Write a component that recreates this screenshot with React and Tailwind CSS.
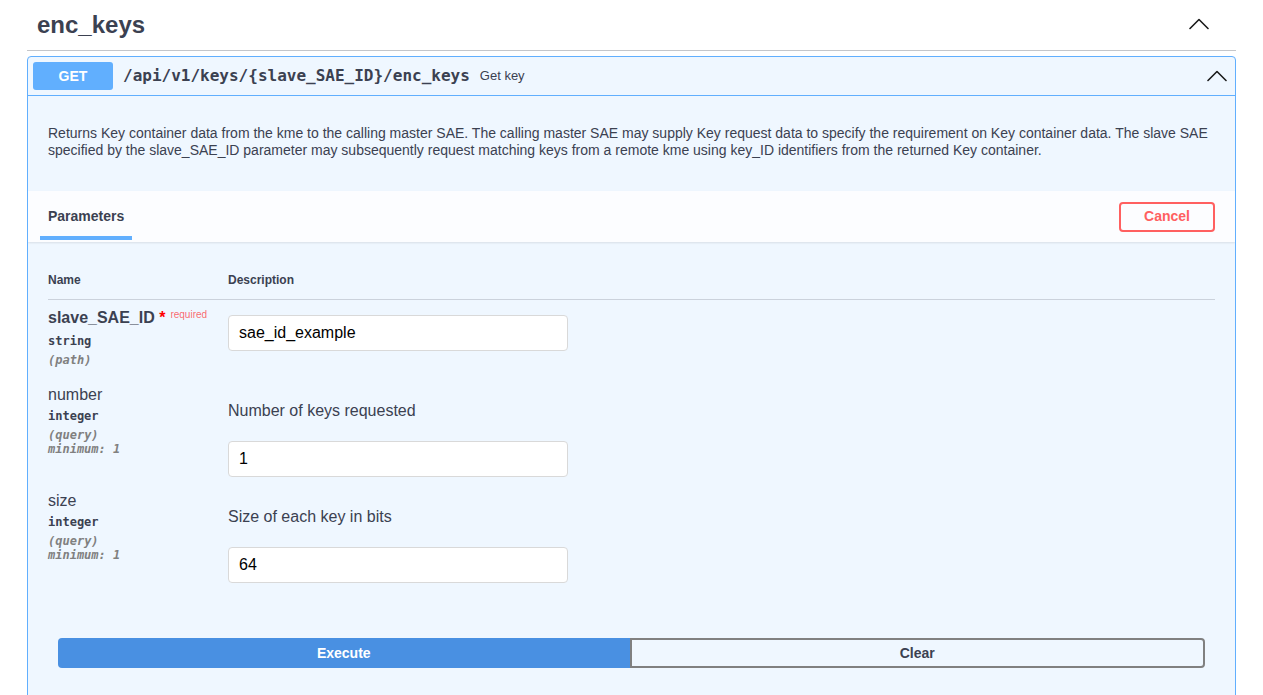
import React from 'react';

const sans = { fontFamily: '"Liberation Sans", Arial, sans-serif' };
const mono = { fontFamily: '"DejaVu Sans Mono", "Liberation Mono", monospace' };

const Chevron = ({ className = '' }) => (
    <svg viewBox="0 0 20 20" className={className} fill="none" stroke="#1b1b1b" strokeWidth="1.6" strokeLinecap="round" strokeLinejoin="round">
        <polyline points="1,14.5 10,5.5 19,14.5" />
    </svg>
);

const ParamInput = ({ value }) => (
    <input
        type="text"
        defaultValue={value}
        className="w-[340px] h-[36px] bg-white border border-[#d9d9d9] rounded-[4px] pl-[10px] text-[16px] text-[#000] outline-none"
        style={sans}
    />
);

const ParamRow = ({ name, required, type, location, minimum, description, value, first }) => (
    <div className="flex">
        <div className={`w-[180px] shrink-0 pt-[9px] ${first ? 'pb-[10px]' : ''}`}>
            <div className={`text-[16px] leading-[18px] ${required ? 'font-bold' : ''}`}>
                {name}
                {required && (
                    <>
                        <span className="text-[#ff0000]">&nbsp;*</span>
                        <span className="relative -top-[5px] pl-[5px] text-[10px] font-normal text-[rgba(255,0,0,0.6)]">required</span>
                    </>
                )}
            </div>
            <div className="pt-[5px] text-[12px] leading-[15px] font-bold" style={mono}>{type}</div>
            <div className="pt-[4px] text-[12px] leading-[14px] italic font-semibold text-[#808080]" style={mono}>({location})</div>
            {minimum && (
                <div className="text-[12px] leading-[14px] italic font-semibold text-[#808080]" style={mono}>minimum: {minimum}</div>
            )}
        </div>
        <div className={first ? 'pt-[15px]' : 'pt-[25px] pb-[6px]'}>
            {description && <p className="text-[16px] leading-[18px] mb-[21px]">{description}</p>}
            <ParamInput value={value} />
        </div>
    </div>
);

export default function App() {
    return (
        <div className="min-h-[695px] bg-white text-[#3b4151] px-[27px]" style={sans}>
            {/* tag header */}
            <div className="h-[51px] border-b border-[rgba(59,65,81,0.3)] mb-[5px] flex items-center justify-between pl-[10px] pr-[27px]">
                <h4 className="text-[24px] font-bold leading-none -mt-[1px]">enc_keys</h4>
                <Chevron className="w-[20px] h-[20px] -mt-[2px]" />
            </div>

            {/* operation block */}
            <div className="border border-[#61affe] rounded-[4px] bg-[#eff7ff] overflow-hidden">
                <div className="flex items-center p-[5px] border-b border-[#61affe]">
                    <span className="min-w-[80px] h-[28px] flex items-center justify-center rounded-[3px] bg-[#61affe] text-white text-[14px] font-bold">GET</span>
                    <span className="ml-[10px] text-[16px] font-bold text-[#3b4151]" style={mono}>/api/v1/keys/{'{'}slave_SAE_ID{'}'}/enc_keys</span>
                    <span className="px-[10px] text-[13px] text-[#3b4151]">Get key</span>
                    <div className="flex-1" />
                    <Chevron className="w-[20px] h-[20px] mr-[3px]" />
                </div>

                <div className="px-[20px] pt-[29px] pb-[32px] text-[14px] leading-[17px]">
                    Returns Key container data from the kme to the calling master SAE. The calling master SAE may supply Key request data to specify the requirement on Key container data. The slave SAE specified by the slave_SAE_ID parameter may subsequently request matching keys from a remote kme using key_ID identifiers from the returned Key container.
                </div>

                {/* parameters header */}
                <div className="h-[51px] bg-white/80 shadow-[0_1px_2px_rgba(0,0,0,0.1)] flex items-center justify-between pl-[12px] pr-[20px]">
                    <div className="relative self-stretch flex items-center px-[8px]">
                        <span className="text-[14px] font-bold">Parameters</span>
                        <span className="absolute left-0 right-0 top-[45px] h-[4px] bg-[#61affe]" />
                    </div>
                    <button className="w-[96px] h-[30px] border-2 border-[#ff6060] rounded-[4px] text-[#ff6060] text-[14px] font-bold bg-transparent">Cancel</button>
                </div>

                {/* parameters table */}
                <div className="px-[20px]">
                    <div className="flex pt-[31px] pb-[11px] border-b border-[rgba(59,65,81,0.2)] text-[12px] leading-[15px] font-bold">
                        <div className="w-[180px]">Name</div>
                        <div>Description</div>
                    </div>
                    <ParamRow first name="slave_SAE_ID" required type="string" location="path" value="sae_id_example" />
                    <ParamRow name="number" type="integer" location="query" minimum="1" description="Number of keys requested" value="1" />
                    <ParamRow name="size" type="integer" location="query" minimum="1" description="Size of each key in bits" value="64" />
                </div>

                {/* execute / clear */}
                <div className="flex px-[30px] pt-[49px] pb-[40px]">
                    <button className="flex-1 h-[30px] bg-[#4990e2] text-white text-[14px] font-bold rounded-l-[4px]">Execute</button>
                    <button className="flex-1 h-[30px] border-2 border-[#808080] text-[#3b4151] text-[14px] font-bold rounded-r-[4px] bg-transparent">Clear</button>
                </div>
            </div>
        </div>
    );
}
